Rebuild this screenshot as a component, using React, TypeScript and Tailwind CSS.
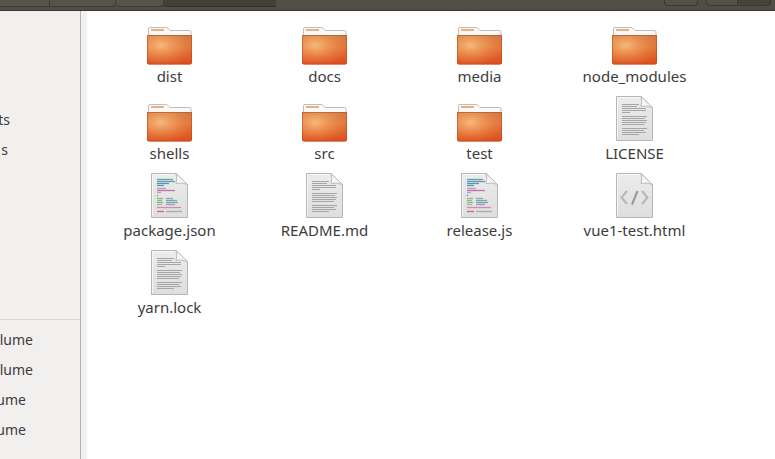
import React from 'react';

type Kind = 'folder' | 'text' | 'code' | 'html';

interface FileEntry {
  name: string;
  kind: Kind;
}

const files: FileEntry[] = [
  { name: 'dist', kind: 'folder' },
  { name: 'docs', kind: 'folder' },
  { name: 'media', kind: 'folder' },
  { name: 'node_modules', kind: 'folder' },
  { name: 'shells', kind: 'folder' },
  { name: 'src', kind: 'folder' },
  { name: 'test', kind: 'folder' },
  { name: 'LICENSE', kind: 'text' },
  { name: 'package.json', kind: 'code' },
  { name: 'README.md', kind: 'text' },
  { name: 'release.js', kind: 'code' },
  { name: 'vue1-test.html', kind: 'html' },
  { name: 'yarn.lock', kind: 'text' },
];

// [y, x, length]
const textLines = [
  [10, 12, 17], [12, 12, 15], [14, 12, 24], [16, 12, 24], [18, 12, 8],
  [22, 12, 25], [24, 12, 23], [26, 12, 25], [28, 12, 24], [30, 12, 22],
  [34, 12, 25], [36, 12, 22], [38, 12, 24], [40, 12, 17],
];

// [y, x, length, colour]
const codeLines: [number, number, number, string][] = [
  [8, 12, 16, '#5fa0a6'], [10, 12, 18, '#5b9daa'], [12, 12, 12, '#4c9bb5'], [14, 12, 7, '#5a93bb'],
  [17, 12, 9, '#b49ac2'], [19, 12, 18, '#c471a4'], [21, 12, 4, '#9db0c8'],
  [24, 12, 1, '#59a65a'], [27, 12, 6, '#8cba88'], [27, 21, 7, '#86a9b5'],
  [29, 12, 5, '#8cba88'], [29, 21, 11, '#7ba5b7'], [31, 12, 6, '#8cba88'], [31, 21, 12, '#7ba5b7'],
  [33, 12, 5, '#a9bba2'], [33, 21, 9, '#86a9b5'],
  [36, 12, 24, '#d58bae'], [40, 12, 7, '#d4608c'], [40, 21, 16, '#b5a2b5'],
];

const FolderIcon = () => (
  <svg viewBox="1 0 48 48" className="h-12 w-12" aria-hidden="true">
    <defs>
      <linearGradient id="folderBody" x1="0" y1="0" x2="0" y2="1">
        <stop offset="0" stopColor="#cf7a45" />
        <stop offset="0.4" stopColor="#e2763a" />
        <stop offset="1" stopColor="#dc4c1c" />
      </linearGradient>
      <radialGradient id="folderShine" cx="0.3" cy="0.35" r="0.75">
        <stop offset="0" stopColor="#fbc98a" stopOpacity="0.8" />
        <stop offset="0.5" stopColor="#f7ad68" stopOpacity="0.4" />
        <stop offset="1" stopColor="#f08a48" stopOpacity="0" />
      </radialGradient>
    </defs>
    <path
      d="M3.5 20V12q0-1.5 1.5-1.5h16q1.5 0 2.500 1.5l1.5 1.5h19.5q1.5 0 1.5 1.5V20z"
      fill="#fbf9f7"
      stroke="#c2bdb8"
    />
    <path d="M6 13h13" stroke="#e3b08a" strokeWidth="2" />
    <path d="M2 18h45V45.5q0 2-2 2H4q-2 0-2-2z" fill="url(#folderBody)" />
    <path d="M2 18h45V45.5q0 2-2 2H4q-2 0-2-2z" fill="url(#folderShine)" />
    <path d="M2.5 18.5V45.5q0 1.5 1.5 1.5h41q1.5 0 1.5-1.5V18.5z" fill="none" stroke="#b94c20" strokeOpacity="0.6" />
  </svg>
);

const DocumentIcon = ({ kind }: { kind: Kind }) => (
  <svg viewBox="1 0 48 48" className="h-12 w-12" aria-hidden="true">
    <defs>
      <linearGradient id="paper" x1="0" y1="0" x2="0" y2="1">
        <stop offset="0" stopColor="#ececec" />
        <stop offset="1" stopColor="#dedede" />
      </linearGradient>
      <linearGradient id="fold" x1="0" y1="1" x2="1" y2="0">
        <stop offset="0" stopColor="#ffffff" />
        <stop offset="0.5" stopColor="#f4f4f4" />
        <stop offset="1" stopColor="#bdbdbd" />
      </linearGradient>
    </defs>
    <path d="M6.5 2.5H31L42.5 13.5V46.5H6.5z" fill="url(#paper)" stroke="#b6b6b6" strokeLinejoin="round" />
    <path d="M7.5 45.5V3.5H30" fill="none" stroke="#fafafa" strokeOpacity="0.8" />
    <path d="M31 2.5q1.5 5 0 10q6-1.5 11.5 1z" fill="url(#fold)" stroke="#bababa" />
    {kind === 'text' &&
      textLines.map(([y, x, length]) => (
        <path key={y} d={`M${x} ${y}.5h${length}`} stroke="#a6a6a6" />
      ))}
    {kind === 'code' &&
      codeLines.map(([y, x, length, colour]) => (
        <path key={`${y}-${x}`} d={`M${x} ${y}.5h${length}`} stroke={colour} strokeWidth="1.3" />
      ))}
    {kind === 'html' && (
      <g fill="none" strokeWidth="2">
        <path d="M17 20L11.5 26.5L17 33M32 20L37.5 26.5L32 33" stroke="#b6b6b6" />
        <path d="M27.5 20L22 33.5" stroke="#979797" />
      </g>
    )}
  </svg>
);

const FileTile = ({ file }: { file: FileEntry }) => (
  <button type="button" className="flex flex-col items-center gap-px">
    {file.kind === 'folder' ? <FolderIcon /> : <DocumentIcon kind={file.kind} />}
    <span className="leading-5 whitespace-nowrap">{file.name}</span>
  </button>
);

const PlaceItem = ({ label, width }: { label: string; width: string }) => (
  <li>
    <button type="button" className={`flex h-[30px] items-center justify-end ${width}`}>
      {label}
    </button>
  </li>
);

const Toolbar = () => (
  <header className="flex h-[11px] justify-between border-b border-[#393731] bg-[#504e46]">
    <nav aria-label="Path" className="flex h-[7px]">
      <button type="button" aria-label="Home" className="w-[50px] border-r border-b border-[#3d3b35] bg-[#55534a]" />
      <button type="button" aria-label="Parent folder" className="w-[66px] rounded-br border-r border-b border-[#3d3b35] bg-[#55534a]" />
      <button type="button" aria-label="Folder" className="w-12 rounded-b border-r border-b border-[#3d3b35] bg-[#55534a]" />
      <button type="button" aria-label="Current folder" className="w-28 border-b border-[#34322d] bg-[#424039]" />
    </nav>
    <div className="flex h-[6px] gap-2 pr-1">
      <button type="button" aria-label="Search" className="w-[34px] rounded-b border border-t-0 border-[#3b3933] bg-[#535148]" />
      <div className="flex">
        <button type="button" aria-label="List view" className="w-8 rounded-bl border border-t-0 border-[#3b3933] bg-[#535148]" />
        <button type="button" aria-label="Grid view" className="w-[33px] rounded-br border border-t-0 border-l-0 border-[#3b3933] bg-[#45433c]" />
      </div>
    </div>
  </header>
);

export default function App() {
  return (
    <div className="flex min-h-screen flex-col overflow-hidden bg-white font-['Noto_Sans',sans-serif] text-[15px] text-[#3c3c3c]">
      <Toolbar />
      <div className="flex grow">
        <aside className="w-[81px] shrink-0 overflow-hidden border-r border-[#b5b3b1] bg-[#f1f0ef] text-sm">
          <ul className="pt-[94px] pb-[154px]">
            <PlaceItem label="ts" width="w-2.5" />
            <PlaceItem label="s" width="w-2" />
          </ul>
          <ul className="border-t border-[#d9d7d5] pt-[5px]">
            <PlaceItem label="lume" width="w-[33px]" />
            <PlaceItem label="lume" width="w-[33px]" />
            <PlaceItem label="ume" width="w-[26px]" />
            <PlaceItem label="ume" width="w-[26px]" />
          </ul>
        </aside>
        <div className="w-1.5 shrink-0 bg-[#f2f1f0]" />
        <main className="grid grow auto-rows-[77px] grid-cols-[repeat(auto-fill,155px)] content-start pt-1.5 pl-[5px]">
          {files.map((file) => (
            <FileTile key={file.name} file={file} />
          ))}
        </main>
      </div>
    </div>
  );
}
